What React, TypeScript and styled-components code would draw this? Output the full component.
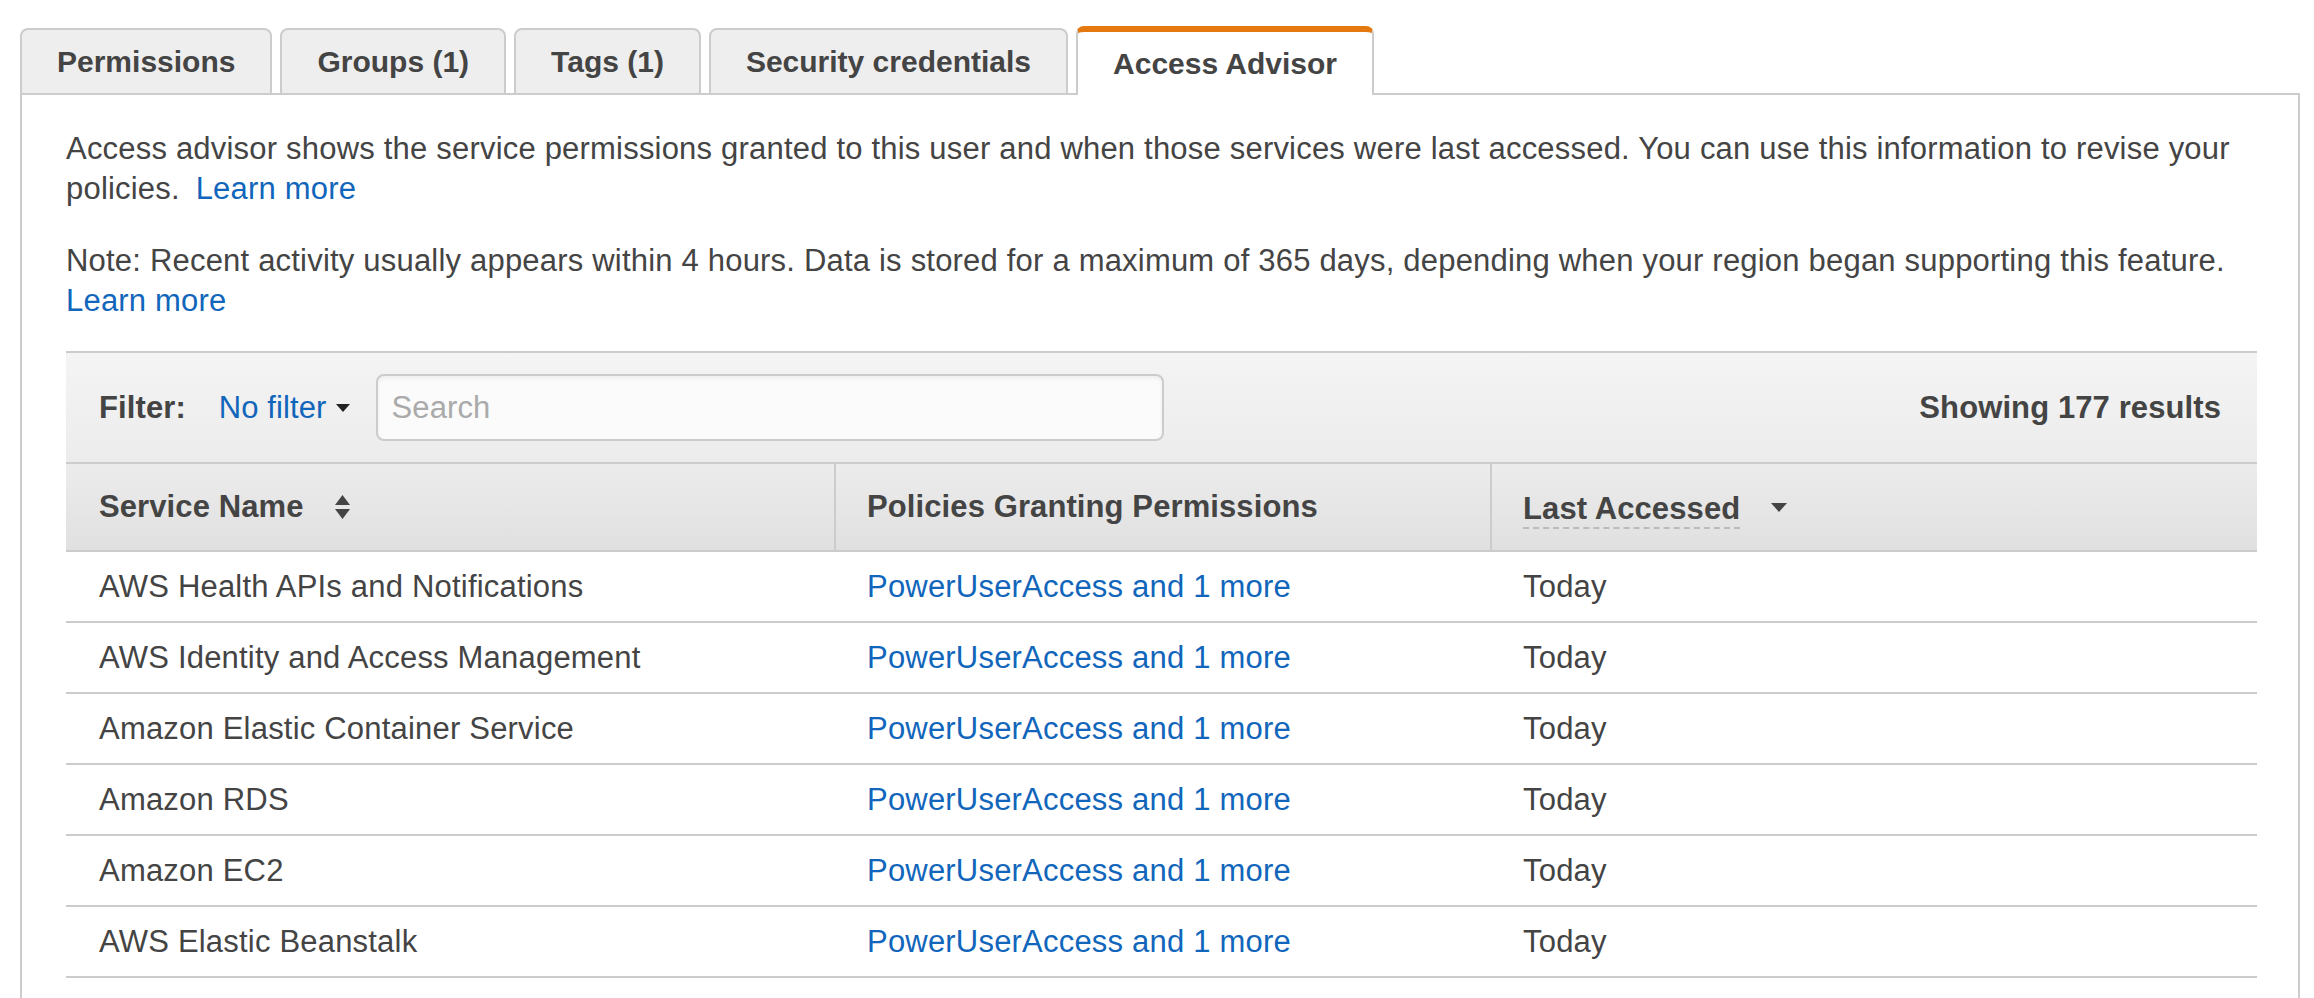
import React from "react";
import styled, { createGlobalStyle } from "styled-components";

const GlobalStyle = createGlobalStyle`
  html, body {
    margin: 0;
    padding: 0;
    background: #ffffff;
  }
  body {
    font-family: "Liberation Sans", Arial, Helvetica, sans-serif;
    color: #444444;
  }
`;

const Page = styled.div`
  padding: 26px 14px 0 20px;
  width: 2314px;
  height: 998px;
  box-sizing: border-box;
  overflow: hidden;
`;

const TabBar = styled.div`
  display: flex;
  align-items: flex-end;
  gap: 8px;
  position: relative;
  z-index: 1;
  margin-bottom: -2px;
`;

const Tab = styled.div<{ $active?: boolean }>`
  box-sizing: border-box;
  height: ${(p) => (p.$active ? "69px" : "67px")};
  padding: 0 35px;
  display: flex;
  align-items: center;
  font-size: 30px;
  font-weight: 700;
  color: #444444;
  letter-spacing: 0;
  background: ${(p) => (p.$active ? "#ffffff" : "#eeeeee")};
  border: 2px solid #cccccc;
  border-top: ${(p) => (p.$active ? "6px solid #e47911" : "2px solid #cccccc")};
  border-bottom: ${(p) => (p.$active ? "none" : "2px solid #cccccc")};
  border-radius: 8px 8px 0 0;
`;

const Panel = styled.div`
  border: 2px solid #cccccc;
  border-bottom: none;
  padding: 34px 41px 0 44px;
  height: 920px;
  box-sizing: border-box;
`;

const Paragraph = styled.p`
  margin: 0 0 32px 0;
  font-size: 31px;
  letter-spacing: 0.2px;
  line-height: 40px;
  color: #444444;
`;

const Link = styled.a`
  color: #1166bb;
  text-decoration: none;
  cursor: pointer;
`;

const InlineLink = styled(Link)`
  margin-left: 7px;
`;

const Table = styled.div`
  margin-top: -2px;
  border-top: 2px solid #cccccc;
`;

const FilterBar = styled.div`
  height: 109px;
  box-sizing: border-box;
  display: flex;
  align-items: center;
  padding: 0 36px 0 33px;
  background: linear-gradient(#f4f4f4, #ececec);
  font-size: 31px;
  letter-spacing: 0.1px;
`;

const FilterLabel = styled.span`
  font-weight: 700;
  color: #444444;
  margin-right: 33px;
`;

const FilterDropdown = styled.span`
  display: inline-flex;
  align-items: center;
  gap: 9px;
  color: #1166bb;
  margin-right: 26px;
`;

const Caret = styled.svg`
  display: block;
`;

const SearchInput = styled.div`
  width: 788px;
  height: 67px;
  box-sizing: border-box;
  border: 2px solid #cccccc;
  border-radius: 8px;
  background: #fbfbfb;
  box-shadow: inset 0 2px 4px rgba(0, 0, 0, 0.06);
  display: flex;
  align-items: center;
  padding-left: 14px;
  color: #aaaaaa;
  font-size: 31px;
`;

const ResultCount = styled.span`
  margin-left: auto;
  font-weight: 700;
  color: #444444;
`;

const Grid = styled.div`
  display: grid;
  grid-template-columns: 768px 656px 1fr;
`;

const HeaderCell = styled.div<{ $divider?: boolean }>`
  height: 90px;
  box-sizing: border-box;
  border-top: 2px solid #cccccc;
  border-bottom: 2px solid #cccccc;
  border-left: ${(p) => (p.$divider ? "2px solid #cccccc" : "none")};
  background: linear-gradient(#ececec, #e0e0e0);
  display: flex;
  align-items: center;
  gap: 30px;
  padding-left: ${(p) => (p.$divider ? "31px" : "33px")};
  font-size: 31px;
  letter-spacing: 0.1px;
  font-weight: 700;
  color: #444444;
`;

const DashedLabel = styled.span`
  border-bottom: 2px dashed #bbbbbb;
  padding-bottom: 1px;
  line-height: 34px;
  margin-top: 6px;
`;

const Cell = styled.div`
  height: 71px;
  box-sizing: border-box;
  border-bottom: 2px solid #cccccc;
  display: flex;
  align-items: center;
  padding-left: 33px;
  font-size: 31px;
  letter-spacing: 0.2px;
  color: #444444;
`;

const SortIcon = () => (
  <svg width="17" height="26" viewBox="0 0 17 26">
    <path d="M8.5 1 L16 11 L1 11 Z" fill="#444444" />
    <path d="M1 15 L16 15 L8.5 25 Z" fill="#444444" />
  </svg>
);

const DownIcon = () => (
  <svg width="18" height="11" viewBox="0 0 18 11">
    <path d="M1 1 L17 1 L9 10 Z" fill="#444444" />
  </svg>
);

const tabs = [
  { label: "Permissions" },
  { label: "Groups (1)" },
  { label: "Tags (1)" },
  { label: "Security credentials" },
  { label: "Access Advisor", active: true },
];

const rows = [
  "AWS Health APIs and Notifications",
  "AWS Identity and Access Management",
  "Amazon Elastic Container Service",
  "Amazon RDS",
  "Amazon EC2",
  "AWS Elastic Beanstalk",
];

export default function App() {
  return (
    <>
      <GlobalStyle />
      <Page>
        <TabBar>
          {tabs.map((t) => (
            <Tab key={t.label} $active={t.active}>
              {t.label}
            </Tab>
          ))}
        </TabBar>
        <Panel>
          <Paragraph>
            Access advisor shows the service permissions granted to this user and when those
            services were last accessed. You can use this information to revise your policies.{" "}
            <InlineLink>Learn more</InlineLink>
          </Paragraph>
          <Paragraph>
            Note: Recent activity usually appears within 4 hours. Data is stored for a maximum of
            365 days, depending when your region began supporting this feature.{" "}
            <Link>Learn more</Link>
          </Paragraph>
          <Table>
            <FilterBar>
              <FilterLabel>Filter:</FilterLabel>
              <FilterDropdown>
                No filter
                <Caret width="14" height="8" viewBox="0 0 14 8">
                  <path d="M0 0 L14 0 L7 8 Z" fill="#222222" />
                </Caret>
              </FilterDropdown>
              <SearchInput>Search</SearchInput>
              <ResultCount>Showing 177 results</ResultCount>
            </FilterBar>
            <Grid>
              <HeaderCell>
                Service Name
                <SortIcon />
              </HeaderCell>
              <HeaderCell $divider>Policies Granting Permissions</HeaderCell>
              <HeaderCell $divider>
                <DashedLabel>Last Accessed</DashedLabel>
                <DownIcon />
              </HeaderCell>
              {rows.map((r) => (
                <React.Fragment key={r}>
                  <Cell>{r}</Cell>
                  <Cell>
                    <Link>PowerUserAccess and 1 more</Link>
                  </Cell>
                  <Cell>Today</Cell>
                </React.Fragment>
              ))}
            </Grid>
          </Table>
        </Panel>
      </Page>
    </>
  );
}
